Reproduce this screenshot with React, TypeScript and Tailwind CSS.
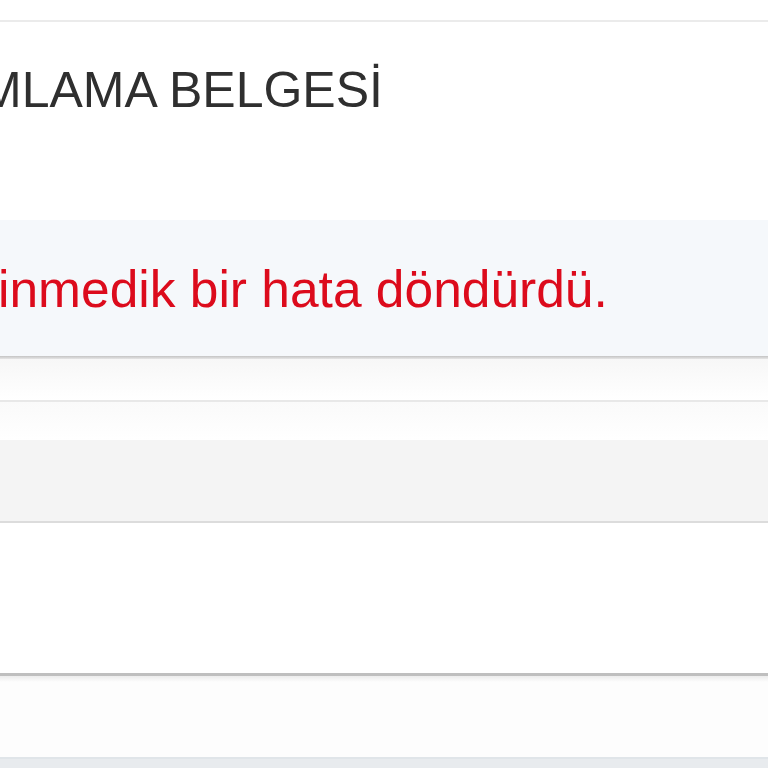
export default function App() {
  return (
    <div className="w-[768px] h-[768px] overflow-hidden bg-white" style={{ fontFamily: '"Liberation Sans", Arial, sans-serif' }}>
      <div className="h-[20px] bg-white" />
      <div className="h-[2px] bg-[#ebebeb]" />
      <div className="h-[198px] pt-[43px] overflow-hidden">
        <div className="-ml-[20px] whitespace-nowrap text-[50px] leading-none text-[#2f2f2f]">MLAMA BELGESİ</div>
      </div>
      <div className="h-[136px] bg-[#f5f8fb] pt-[44px] overflow-hidden">
        <div className="-ml-[2px] whitespace-nowrap text-[51.5px] leading-none text-[#dc0b1c]">inmedik bir hata döndürdü.</div>
      </div>
      <div className="h-[3px] bg-gradient-to-b from-[#c4c4c4] to-[#e6e6e6]" />
      <div className="h-[41px] bg-gradient-to-b from-[#f7f7f7] to-white" />
      <div className="h-[2px] bg-[#e8e8e8]" />
      <div className="h-[38px] bg-gradient-to-b from-[#fafafa] to-white" />
      <div className="h-[83px] bg-[#f4f4f4] border-b-2 border-[#dcdcdc]" />
      <div className="h-[150px] bg-white" />
      <div className="h-[3px] bg-[#bfbfbf]" />
      <div className="h-[6px] bg-gradient-to-b from-[#ececec] to-[#fdfdfd]" />
      <div className="h-[75px] bg-[#fdfdfd]" />
      <div className="h-[11px] bg-[#e8ebee] border-t-2 border-[#e0e5e9]" />
    </div>
  );
}
